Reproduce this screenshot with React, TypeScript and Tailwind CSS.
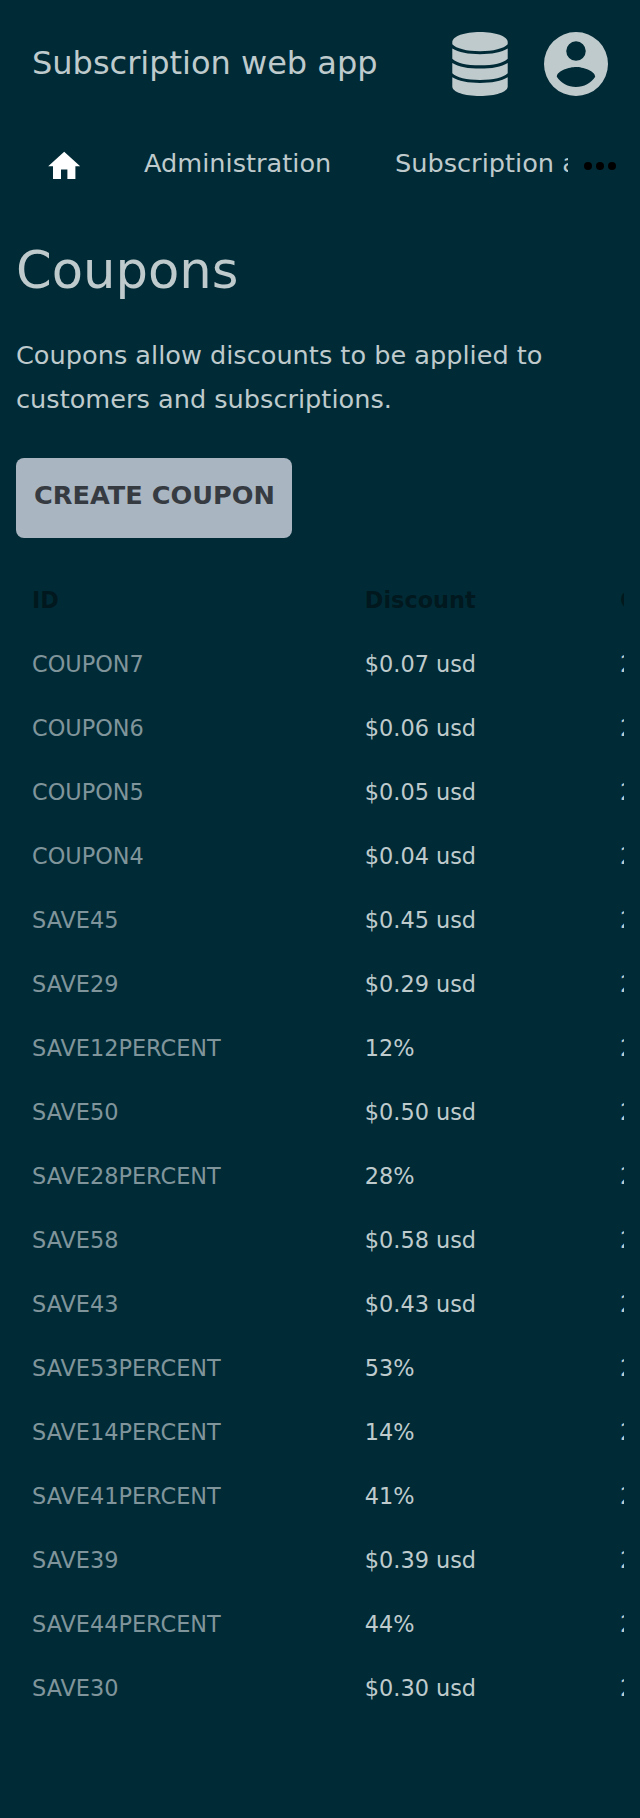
const coupons: [string, string][] = [
  ["COUPON7", "$0.07 usd"],
  ["COUPON6", "$0.06 usd"],
  ["COUPON5", "$0.05 usd"],
  ["COUPON4", "$0.04 usd"],
  ["SAVE45", "$0.45 usd"],
  ["SAVE29", "$0.29 usd"],
  ["SAVE12PERCENT", "12%"],
  ["SAVE50", "$0.50 usd"],
  ["SAVE28PERCENT", "28%"],
  ["SAVE58", "$0.58 usd"],
  ["SAVE43", "$0.43 usd"],
  ["SAVE53PERCENT", "53%"],
  ["SAVE14PERCENT", "14%"],
  ["SAVE41PERCENT", "41%"],
  ["SAVE39", "$0.39 usd"],
  ["SAVE44PERCENT", "44%"],
  ["SAVE30", "$0.30 usd"],
];

function DatabaseIcon() {
  return (
    <svg viewBox="-0.3 0 56.6 64" preserveAspectRatio="none" className="h-16 w-14" fill="currentColor">
      <path d="M28 0C43.500 0 56 4.300 56 10v2.300C52 16.700 41.500 19.200 28 19.200S4 16.700 0 12.300V10C0 4.300 12.500 0 28 0z" />
      <path d="M0 16.500C6 20.300 16.500 22.200 28 22.200S50 20.300 56 16.500V26.700C52 31 41.500 33.300 28 33.300S4 31 0 26.700z" />
      <path d="M0 30.900C6 34.700 16.500 36.600 28 36.600S50 34.700 56 30.900V41.300C52 45.600 41.500 47.900 28 47.900S4 45.600 0 41.300z" />
      <path d="M0 45.300C6 49.100 16.500 51 28 51S50 49.100 56 45.300V54.500C56 60 43.500 64 28 64S0 60 0 54.500z" />
    </svg>
  );
}

function AccountIcon() {
  return (
    <svg viewBox="2 2 20 20" className="size-16" fill="currentColor" fillRule="evenodd">
      <path d="M12 2a10 10 0 1 0 0 20a10 10 0 1 0 0-20zM12 4.900a3.050 3.050 0 1 1 0 6.100a3.050 3.050 0 1 1 0-6.100zM12 19.200c-2.500 0-4.710-1.280-6-3.220.030-1.990 4-3.080 6-3.080 1.990 0 5.970 1.090 6 3.080-1.290 1.940-3.500 3.220-6 3.220z" />
    </svg>
  );
}

export default function App() {
  return (
    <div className="flex h-[1818px] w-[640px] flex-col overflow-hidden bg-[#002b36] font-['DejaVu_Sans',sans-serif] text-[25.6px] text-[#bfcacd]">
      <header className="flex h-32 items-center pr-8 pl-8">
        <span className="grow pb-[2px] text-[32px] whitespace-nowrap">Subscription web app</span>
        <DatabaseIcon />
        <div className="ml-9">
          <AccountIcon />
        </div>
      </header>

      <nav className="flex h-[72px] items-center">
        <div className="flex w-[568px] items-center overflow-hidden whitespace-nowrap">
          <a className="ml-[44.8px] w-[99.2px] shrink-0 pt-[5px]">
            <svg viewBox="0 0 24 24" className="block size-[38.4px]" fill="#fff">
              <path d="M10 20v-6h4v6h5v-8h3L12 3 2 12h3v8z" />
            </svg>
          </a>
          <a className="w-[251px] shrink-0 pb-[2px]">Administration</a>
          <a className="shrink-0 pb-[2px]">Subscription administration</a>
        </div>
        <svg viewBox="0 0 32 8" className="mt-1 ml-4 h-2 w-8" fill="#000">
          <circle cx="4" cy="4" r="4" />
          <circle cx="16" cy="4" r="4" />
          <circle cx="28" cy="4" r="4" />
        </svg>
      </nav>

      <main className="flex flex-col items-start px-4">
        <h1 className="mt-8 h-[77px] text-[51.2px] leading-[77px]">Coupons</h1>
        <p className="mt-6 leading-[44px]">Coupons allow discounts to be applied to customers and subscriptions.</p>
        <button className="mt-[37px] h-20 w-[276px] rounded-lg bg-[#a9b5c1] pb-[6px] pl-px font-bold whitespace-nowrap text-[#363a41]">
          CREATE COUPON
        </button>
        <div className="mt-[31px] w-[608px] overflow-hidden text-[22.4px] whitespace-nowrap">
          <div className="grid h-16 w-[900px] grid-cols-[332.8px_255.2px_1fr] items-center pl-4 font-bold text-[#00181e]">
            <span>ID</span>
            <span>Discount</span>
            <span>Created</span>
          </div>
          {coupons.map(([id, discount]) => (
            <div key={id} className="grid h-16 w-[900px] grid-cols-[332.8px_255.2px_1fr] items-center pl-4">
              <a className="text-[#80959b]">{id}</a>
              <span>{discount}</span>
              <span>2020-05-01</span>
            </div>
          ))}
        </div>
      </main>
    </div>
  );
}
